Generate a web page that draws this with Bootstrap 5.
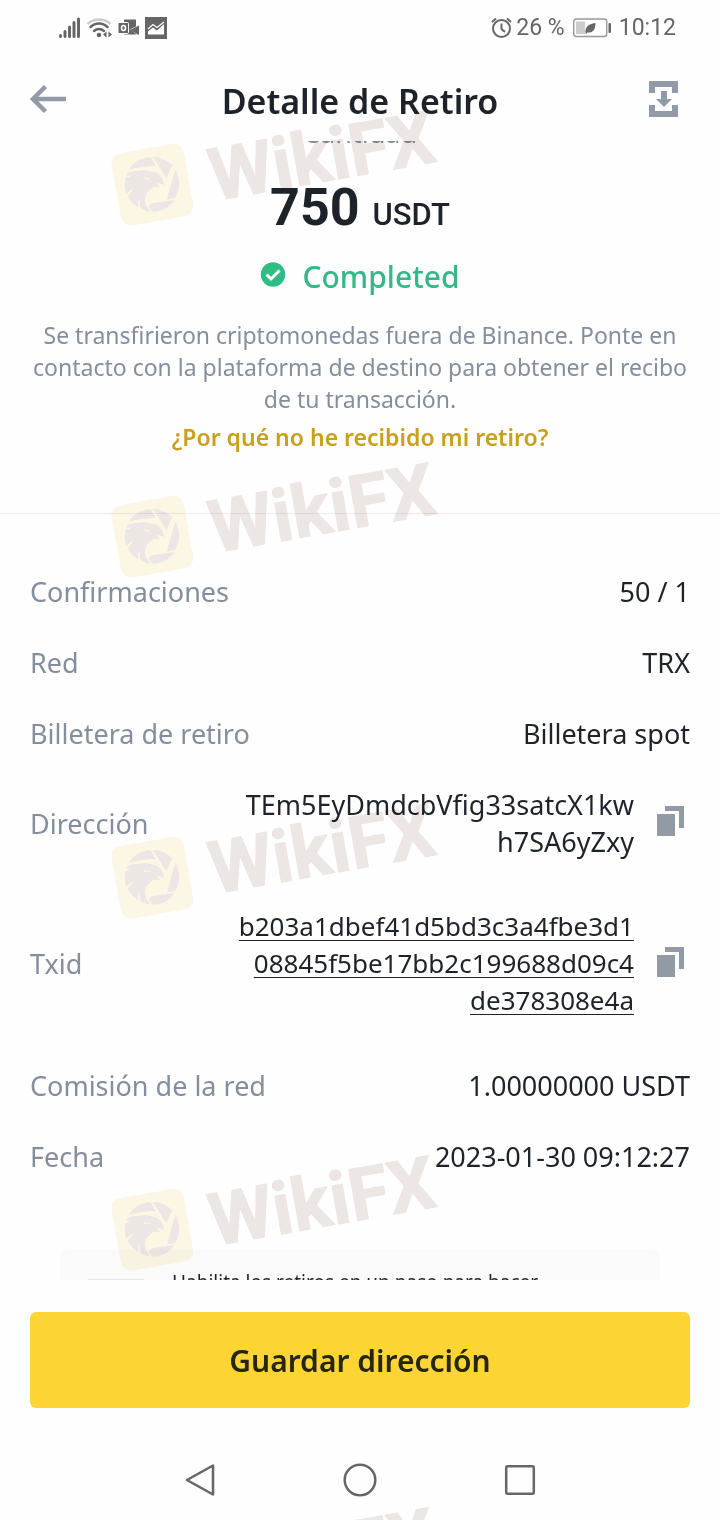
<!DOCTYPE html>
<html lang="es">
<head>
<meta charset="utf-8">
<meta name="viewport" content="width=device-width, initial-scale=1">
<title>Detalle de Retiro</title>
<link href="https://cdn.jsdelivr.net/npm/bootstrap@5.3.0/dist/css/bootstrap.min.css" rel="stylesheet">
<style>
  :root { --ink: #1e2329; --muted: #848e9c; --icon: #929aa5; --sys: #666; }
  body { font-family: "Noto Sans", Roboto, sans-serif; color: var(--ink); background: #fefefe; }
  svg { display: block; flex: none; }
  .screen { height: 100vh; }
  .status-bar { height: 56px; padding: 0 44px 0 58px; font-family: Roboto, sans-serif; font-size: 23px; line-height: 28px; color: var(--sys); }
  .title-bar { height: 85px; padding: 0 30px; }
  .title-bar button { width: 41px; }
  .title-bar h1 { padding-top: 4px; font-size: 34px; line-height: 48px; font-weight: 600; }
  .icon-btn { padding: 0; border: 0; background: none; color: var(--icon); }
  .amount-label { margin-top: -26px; font-size: 27px; line-height: 36px; color: var(--muted); }
  .amount { margin-top: 25px; font-family: Roboto, sans-serif; font-size: 52px; line-height: 64px; font-weight: 700; }
  .amount small { font-size: 31px; font-weight: 500; }
  .state { margin-top: 10px; font-size: 30px; line-height: 40px; font-weight: 500; color: #35b887; }
  .note { margin-top: 22px; font-size: 23px; line-height: 32px; color: var(--muted); }
  .help { margin-top: 6px; font-size: 23px; line-height: 32px; font-weight: 600; color: #c99f1c; text-decoration: none; }
  .summary { padding: 0 30px 60px; border-bottom: 1px solid #e9eaec; }
  .details { padding: 42px 30px 0; font-size: 27px; line-height: 37px; }
  .details dt { font-weight: 400; color: var(--muted); }
  .detail { padding: 17px 0; }
  .detail-long { margin-bottom: 14px; padding-right: 6px; }
  .detail-long dd { gap: 22px; }
  .txid { font-size: 26px; color: var(--ink); text-decoration-thickness: 1px; text-underline-offset: 4px; }
  .tip { margin: 58px 60px 0; padding: 19px 28px; border-radius: 8px; background: #fafafa; font-size: 19px; line-height: 26px; gap: 28px; }
  .tip-art { width: 56px; height: 56px; margin-top: 10px; background: #e6e8ea; flex: none; }
  .action { padding: 32px 30px; }
  .save-btn { height: 96px; border: 0; border-radius: 6px; background: #fcd535; color: #26260f; font-size: 30px; font-weight: 600; }
  .system-nav { height: 80px; color: var(--sys); }
  .system-nav button { width: 160px; color: var(--sys); }
  .watermarks { top: 104px; left: 105px; pointer-events: none; mix-blend-mode: multiply; overflow: visible; }
  .watermarks text { font: 700 73px Roboto, sans-serif; fill: #ede7e5; stroke: #ede7e5; stroke-width: 1px; stroke-linejoin: round; }
</style>
</head>
<body>
<div class="screen position-relative d-flex flex-column overflow-hidden">

  <div class="status-bar flex-shrink-0 d-flex align-items-center justify-content-between">
    <div class="d-flex align-items-center">
      <svg width="110" height="24" viewBox="0 0 110 24" fill="none" stroke="#666">
        <g stroke-width="3" stroke-linecap="round"><path d="M2.500 19.500v1M7 15.500v5M11.500 11v9.500M16 6.500v14M20.500 3v17.500"/></g>
        <path d="M29.500 8a17 17 0 0 1 23 0" stroke="#ccc" stroke-width="2.500"/>
        <path d="M32.500 11a12 12 0 0 1 17 0M36 15a7.500 7.500 0 0 1 10 0" stroke-width="2.500" stroke-linecap="round"/>
        <circle cx="41" cy="19" r="2.300" fill="#666" stroke="none"/>
        <path d="M48.500 15.500v6l-3.500-3zM50.500 15.500v6l3.500-3z" fill="#666" stroke="none"/>
        <path d="M66 3.500h12v7l-6 3 7 5H66z" fill="#666" stroke="none"/>
        <rect x="60" y="6.500" width="10.500" height="11" rx="1" fill="#666" stroke="#fefefe"/>
        <ellipse cx="65.500" cy="12" rx="2" ry="2.500" stroke="#fff" stroke-width="1.500"/>
        <path d="M81 9.500v9.500l-9-5z" fill="#666" stroke="none"/>
        <rect x="87" y="1" width="22" height="22" fill="#666" stroke="none"/>
        <path d="M90 18.500v-3l5-4 4 3 7-6.500v10.500z" fill="#fff" stroke="none"/>
        <path d="M90 13l5-4.500 4 3 7-5.500" stroke="#fff" stroke-width="1.300"/>
      </svg>
    </div>
    <div class="d-flex align-items-center">
      <svg class="me-1" width="21" height="24" viewBox="0 0 21 24" fill="none" stroke="#666" stroke-width="2">
        <circle cx="10.500" cy="12.500" r="8.500"/><path d="M10.500 7.500v5.500l3.500 3M1 6l4-3.500M20 6l-4-3.500"/>
      </svg>
      <span>26 %</span>
      <svg class="mx-2" width="38" height="20" viewBox="0 0 38 20">
        <rect x=".7" y="1" width="33" height="17.500" rx="2.500" fill="#fff" stroke="#999" stroke-width="1.400"/>
        <rect x="3" y="3.500" width="9" height="12.500" fill="#ccc"/>
        <path d="M12.500 15.500C12 9 15 6 22.500 5c0 7-3 10-8 9.500l4-5-5 6z" fill="#666"/>
        <rect x="35.500" y="5" width="2.500" height="10" rx="1" fill="#666"/>
      </svg>
      <time>10:12</time>
    </div>
  </div>

  <header class="title-bar flex-shrink-0 d-flex align-items-center justify-content-between">
    <button class="icon-btn" type="button" aria-label="Volver">
      <svg width="36" height="30" viewBox="0 0 36 30" fill="none" stroke="currentColor" stroke-width="4.500"><path d="M36 15H4M15.500 2.500L3 15l12.500 12.500"/></svg>
    </button>
    <h1 class="mb-0">Detalle de Retiro</h1>
    <button class="icon-btn" type="button" aria-label="Guardar imagen">
      <svg width="29" height="36" viewBox="0 0 29 36" fill="currentColor"><path d="M0 0h29v12h-6V6H6v6H0zM0 24h6v6h17v-6h6v12H0zM12 10h6v8h5l-8 8-8-8h5z"/></svg>
    </button>
  </header>

  <main class="flex-fill overflow-hidden">
    <section class="summary text-center">
      <div class="amount-label">Cantidad</div>
      <div class="amount">750 <small>USDT</small></div>
      <div class="state d-flex align-items-center justify-content-center gap-3">
        <svg width="26" height="30" viewBox="0 0 26 30"><circle cx="13" cy="12.500" r="12.200" fill="#2ebd85"/><path d="M6.500 12.500l4.500 4.500 8.500-8.500" fill="none" stroke="#fff" stroke-width="3"/></svg>
        <span>Completed</span>
      </div>
      <p class="note mb-0">Se transfirieron criptomonedas fuera de Binance. Ponte en contacto con la plataforma de destino para obtener el recibo de tu transacción.</p>
      <a class="help d-inline-block" href="#">¿Por qué no he recibido mi retiro?</a>
    </section>

    <dl class="details mb-0">
      <div class="detail d-flex justify-content-between"><dt>Confirmaciones</dt><dd class="m-0">50 / 1</dd></div>
      <div class="detail d-flex justify-content-between"><dt>Red</dt><dd class="m-0">TRX</dd></div>
      <div class="detail d-flex justify-content-between"><dt>Billetera de retiro</dt><dd class="m-0">Billetera spot</dd></div>
      <div class="detail detail-long d-flex align-items-center justify-content-between">
        <dt>Dirección</dt>
        <dd class="d-flex align-items-center m-0">
          <span class="text-end">TEm5EyDmdcbVfig33satcX1kw<br>h7SA6yZxy</span>
          <button class="icon-btn pb-1" type="button" aria-label="Copiar dirección"><svg width="28" height="30" viewBox="0 0 28 30" fill="currentColor"><path d="M1 8h18v22H1zM9 0h19v22h-5V5H9z"/></svg></button>
        </dd>
      </div>
      <div class="detail detail-long d-flex align-items-center justify-content-between">
        <dt>Txid</dt>
        <dd class="d-flex align-items-center m-0">
          <a class="txid text-end" href="#">b203a1dbef41d5bd3c3a4fbe3d1<br>08845f5be17bb2c199688d09c4<br>de378308e4a</a>
          <button class="icon-btn pb-1" type="button" aria-label="Copiar Txid"><svg width="28" height="30" viewBox="0 0 28 30" fill="currentColor"><path d="M1 8h18v22H1zM9 0h19v22h-5V5H9z"/></svg></button>
        </dd>
      </div>
      <div class="detail d-flex justify-content-between"><dt>Comisión de la red</dt><dd class="m-0">1.00000000 USDT</dd></div>
      <div class="detail d-flex justify-content-between"><dt>Fecha</dt><dd class="m-0">2023-01-30 09:12:27</dd></div>
    </dl>

    <div class="tip d-flex align-items-start">
      <div class="tip-art"></div>
      <div>Habilita los retiros en un paso para hacer</div>
    </div>
  </main>

  <div class="action flex-shrink-0">
    <button class="save-btn btn w-100" type="button">Guardar dirección</button>
  </div>

  <nav class="system-nav flex-shrink-0 d-flex align-items-center justify-content-center" aria-label="Sistema">
    <button class="icon-btn d-flex justify-content-center" type="button" aria-label="Atrás"><svg width="32" height="34" viewBox="0 0 32 34" fill="none" stroke="currentColor" stroke-width="2.500" stroke-linejoin="round"><path d="M29 2.500v29L3 17z"/></svg></button>
    <button class="icon-btn d-flex justify-content-center" type="button" aria-label="Inicio"><svg width="34" height="34" viewBox="0 0 34 34" fill="none" stroke="currentColor" stroke-width="2.500"><circle cx="17" cy="17" r="15.300"/></svg></button>
    <button class="icon-btn d-flex justify-content-center" type="button" aria-label="Recientes"><svg width="32" height="32" viewBox="0 0 32 32" fill="none" stroke="currentColor" stroke-width="2.500"><rect x="2.200" y="2.200" width="27.600" height="27.600" rx="1.500"/></svg></button>
  </nav>

  <svg class="watermarks position-absolute h-100" width="345" aria-hidden="true">
    <defs>
      <g id="eagle" transform="translate(0 34) scale(.3333)">
        <rect x="32" y="30" width="220" height="220" rx="30" transform="rotate(-10 142 140)" fill="#fdf7e6"/>
        <g fill="#ede7e5">
          <path d="M72 95C86 72 108 59 136 57L152 84C125 84 98 88 72 95z"/>
          <path d="M144 56C168 57 186 66 201 82L184 121z"/>
          <path d="M211 95C225 118 226 152 211 179L186 184z"/>
          <path d="M139 196L209 186C193 209 172 220 145 221L130 206z"/>
          <path d="M68 104C95 96 126 93 150 103C165 108 174 120 177 143C170 136 163 134 155 137L165 147C150 143 141 147 135 156C123 164 117 178 121 193C124 205 131 213 137 220C125 219 116 216 108 211C103 201 103 190 104 181C99 189 98 198 99 207C84 198 74 186 68 173C77 165 82 159 86 151C76 156 69 162 64 168C59 154 58 137 61 121C66 120 72 117 78 113C73 112 69 112 64 114z"/>
        </g>
        <path d="M115 118C123 124 130 124 136 119" fill="none" stroke="#fdf7e6" stroke-width="4"/>
      </g>
    </defs>
    <g><use href="#eagle"/><text transform="translate(109 97) rotate(-10)">WikiFX</text></g>
    <g transform="translate(0 352)"><use href="#eagle"/><text transform="translate(109 97) rotate(-10)">WikiFX</text></g>
    <g transform="translate(0 693)"><use href="#eagle"/><text transform="translate(109 97) rotate(-10)">WikiFX</text></g>
    <g transform="translate(0 1045)"><use href="#eagle"/><text transform="translate(109 97) rotate(-10)">WikiFX</text></g>
    <g transform="translate(0 1397)"><text transform="translate(109 97) rotate(-10)">WikiFX</text></g>
  </svg>
</div>
<script src="https://cdn.jsdelivr.net/npm/bootstrap@5.3.0/dist/js/bootstrap.bundle.min.js"></script>
</body>
</html>
